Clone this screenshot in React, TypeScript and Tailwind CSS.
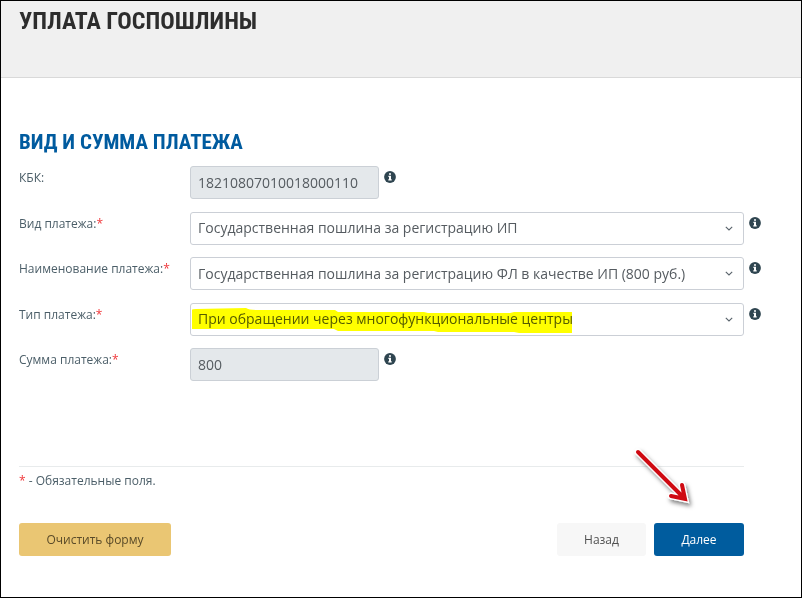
import { useId } from "react";
import type { ReactNode } from "react";

function InfoIcon() {
  return (
    <svg viewBox="0 0 12 12" className="h-3 w-3 shrink-0" role="img" aria-label="Подсказка">
      <circle cx="6" cy="6" r="5.9" fill="#2f4550" />
      <path d="M5 2.2h2v1.6H5zM4.4 4.8H7v3.4h.7v1.4H4.3V8.2H5V6.1h-.6z" fill="#fff" />
    </svg>
  );
}

function Row({ id, label, required, children }: { id: string; label: string; required?: boolean; children: ReactNode }) {
  return (
    <div className="flex items-start">
      <label htmlFor={id} className="w-[171px] shrink-0 pt-[3px] text-xs leading-[18px] text-[#4b5e68]">
        {label}:{required && <span className="text-[#f0383b]">*</span>}
      </label>
      {children}
      <span className="ml-[5px] pt-[5px]">
        <InfoIcon />
      </span>
    </div>
  );
}

function ReadOnlyField({ label, value, required }: { label: string; value: string; required?: boolean }) {
  const id = useId();
  return (
    <Row id={id} label={label} required={required}>
      <input
        id={id}
        readOnly
        value={value}
        className="h-[33px] w-[189px] rounded-[3px] border border-[#cbd0d6] bg-[#e4e8eb] px-[7px] text-sm text-[#555b60] outline-none"
      />
    </Row>
  );
}

function SelectField({ label, value, children }: { label: string; value: string; children?: ReactNode }) {
  const id = useId();
  return (
    <Row id={id} label={label} required>
      <div className="relative min-w-0 flex-1">
        <select
          id={id}
          className="block h-[33px] w-full appearance-none rounded-[3px] border border-[#cbcfd6] bg-white pr-8 pl-[7px] text-sm text-[#555b60] outline-none"
        >
          <option>{value}</option>
        </select>
        <svg viewBox="0 0 8 5" className="pointer-events-none absolute top-[14px] right-[11px] h-[5px] w-2" aria-hidden="true">
          <path d="M.8.8 4 4 7.2.8" fill="none" stroke="#59636b" strokeWidth="1.1" />
        </svg>
        {children}
      </div>
    </Row>
  );
}

function Marker() {
  return (
    <svg
      viewBox="0 0 380 26"
      className="pointer-events-none absolute top-[5px] left-[2px] h-[26px] w-[380px] mix-blend-multiply"
      aria-hidden="true"
    >
      <path
        d="M0 2Q0 1 4 1L54 0Q57 2 66 2L143 2 146 4 232 4 236 5 318 5 322 4H380V25H327L322 24H246L242 23H146L142 21H0Z"
        fill="#ffff00"
      />
    </svg>
  );
}

function Arrow() {
  return (
    <svg
      viewBox="0 0 70 70"
      className="pointer-events-none absolute right-[49px] bottom-[47px] h-[70px] w-[70px] overflow-visible"
      aria-hidden="true"
    >
      <defs>
        <filter id="arrow-shadow" x="-20%" y="-20%" width="150%" height="150%">
          <feDropShadow dx="2" dy="3" stdDeviation="2" floodColor="#000" floodOpacity="0.5" />
        </filter>
      </defs>
      <path
        d="M13 13 58 58M57 46 60 60 46 57"
        fill="none"
        stroke="#fff"
        strokeWidth="6.5"
        strokeLinecap="round"
        filter="url(#arrow-shadow)"
      />
      <path d="M13 13 58 58M57 46 60 60 46 57" fill="none" stroke="#cf0a12" strokeWidth="4" strokeLinecap="round" />
    </svg>
  );
}

export default function App() {
  return (
    <div className="min-h-screen border border-black bg-white font-['Open_Sans','Noto_Sans',sans-serif]">
      <header className="border-b border-[#d9d9d9] bg-[#f0f0f0] px-[18px] pt-[6px] pb-[42px]">
        <h1 className="font-['Roboto_Condensed',Roboto,sans-serif] text-2xl leading-7 font-bold text-[#2d2d2d]">
          УПЛАТА ГОСПОШЛИНЫ
        </h1>
      </header>
      <main className="pt-[50px] pr-[40px] pb-10 pl-[18px]">
        <form onSubmit={(e) => e.preventDefault()}>
          <h2 className="font-['Roboto_Condensed',Roboto,sans-serif] text-[21px] leading-7 font-bold text-[#005b9f]">
            ВИД И СУММА ПЛАТЕЖА
          </h2>
          <div className="mt-[10px] flex min-h-[215px] flex-col justify-between">
            <ReadOnlyField label="КБК" value="18210807010018000110" />
            <SelectField label="Вид платежа" value="Государственная пошлина за регистрацию ИП" />
            <SelectField
              label="Наименование платежа"
              value="Государственная пошлина за регистрацию ФЛ в качестве ИП (800 руб.)"
            />
            <SelectField label="Тип платежа" value="При обращении через многофункциональные центры">
              <Marker />
            </SelectField>
            <ReadOnlyField label="Сумма платежа" value="800" required />
          </div>
          <div className="mt-[85px] mr-[17px] border-t border-[#e8ebec] pt-[5px]">
            <p className="text-xs leading-[18px] text-[#4b5e68]">
              <span className="text-[#f0383b]">*</span> - Обязательные поля.
            </p>
            <div className="relative mt-[33px] flex text-xs">
              <button type="reset" className="h-[33px] w-[152px] rounded-[3px] bg-[#eac673] text-[#5a4b29]">
                Очистить форму
              </button>
              <button type="button" className="ml-auto h-[33px] w-[89px] rounded-[3px] bg-[#f7f7f7] text-[#505050]">
                Назад
              </button>
              <button type="submit" className="ml-2 h-[33px] w-[90px] rounded-[3px] bg-[#005c9e] font-medium text-white">
                Далее
              </button>
              <Arrow />
            </div>
          </div>
        </form>
      </main>
    </div>
  );
}
